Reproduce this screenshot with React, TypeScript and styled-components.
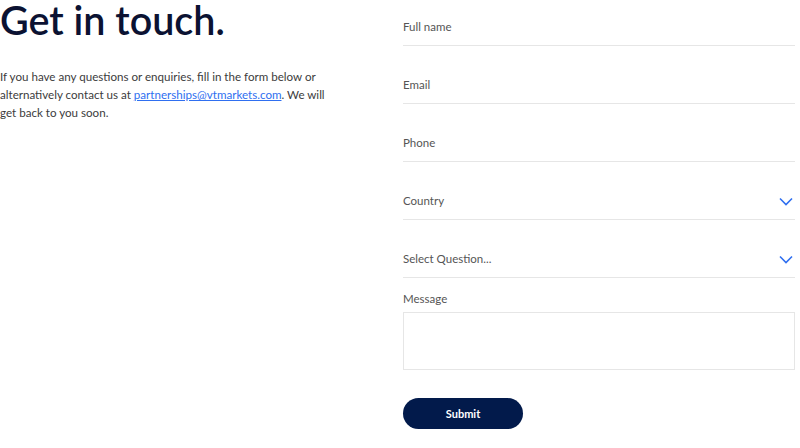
import React from "react";
import styled, { createGlobalStyle } from "styled-components";

const Global = createGlobalStyle`
  html, body { margin: 0; padding: 0; background: #fff; }
  body { font-family: Lato, "Noto Sans", sans-serif; }
  * { box-sizing: border-box; }
`;

const Page = styled.div`
  display: grid;
  grid-template-columns: 340px 392px;
  column-gap: 63px;
  width: 800px;
  height: 448px;
  overflow: hidden;
`;

const Intro = styled.div`
  display: flex;
  flex-direction: column;
`;

const Heading = styled.h1`
  margin: 0;
  font-size: 39.5px;
  line-height: 40px;
  font-weight: 600;
  color: #0b1232;
`;

const Text = styled.p`
  margin: 28px 0 0 0;
  font-size: 11.6px;
  line-height: 18px;
  color: #3c3c3c;
`;

const Link = styled.a`
  color: #2f6ff0;
  text-decoration: underline;
`;

const Form = styled.form`
  display: flex;
  flex-direction: column;
  gap: 12px;
`;

const Field = styled.div`
  height: 46px;
  border-bottom: 1px solid #e6e6e6;
  display: flex;
  align-items: center;
  justify-content: space-between;
  padding: 9px 2px 0 0;
`;

const Label = styled.span`
  font-size: 11.5px;
  line-height: 16px;
  color: #555;
`;

const MessageBlock = styled.div`
  display: flex;
  flex-direction: column;
  gap: 5px;
  margin-top: 1px;
`;

const TextArea = styled.div`
  height: 58px;
  border: 1px solid #e6e6e6;
`;

const Button = styled.button`
  margin-top: 16px;
  width: 120px;
  height: 31px;
  border: none;
  border-radius: 16px;
  background: #021a4b;
  color: #fff;
  font-family: Lato, sans-serif;
  font-weight: 700;
  font-size: 11px;
`;

const Chevron = () => (
  <svg width="14" height="9" viewBox="0 0 14 9">
    <path d="M1 1.5 L7 7.5 L13 1.5" fill="none" stroke="#2f6ff0" strokeWidth="1.6" />
  </svg>
);

export default function App() {
  return (
    <>
      <Global />
      <Page>
        <Intro>
          <Heading>Get in touch.</Heading>
          <Text>
            If you have any questions or enquiries, fill in the form below or alternatively
            contact us at <Link href="#">partnerships@vtmarkets.com</Link>. We will get back to
            you soon.
          </Text>
        </Intro>
        <Form onSubmit={(e) => e.preventDefault()}>
          <Field><Label>Full name</Label></Field>
          <Field><Label>Email</Label></Field>
          <Field><Label>Phone</Label></Field>
          <Field><Label>Country</Label><Chevron /></Field>
          <Field><Label>Select Question...</Label><Chevron /></Field>
          <MessageBlock>
            <Label>Message</Label>
            <TextArea />
          </MessageBlock>
          <Button type="submit">Submit</Button>
        </Form>
      </Page>
    </>
  );
}
